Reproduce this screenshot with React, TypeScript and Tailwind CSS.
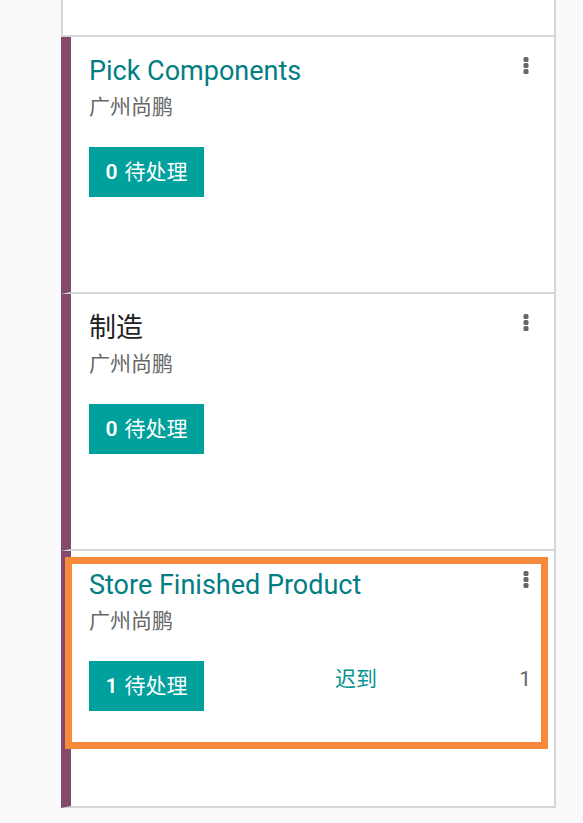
import React from 'react';

interface Picking {
  name: string;
  company: string;
  pending: number;
  late?: number;
  link: boolean;
}

const PICKINGS: Picking[] = [
  { name: 'Pick Components', company: '广州尚鹏', pending: 0, link: true },
  { name: '制造', company: '广州尚鹏', pending: 0, link: false },
  { name: 'Store Finished Product', company: '广州尚鹏', pending: 1, late: 1, link: true },
];

function Kebab() {
  return (
    <svg width="6" height="17" viewBox="0 0 6 17" className="shrink-0">
      <rect x="0.5" y="0" width="5" height="5" rx="1.5" fill="#666" />
      <rect x="0.5" y="6" width="5" height="5" rx="1.5" fill="#666" />
      <rect x="0.5" y="12" width="5" height="5" rx="1.5" fill="#666" />
    </svg>
  );
}

function Card({ p }: { p: Picking }) {
  return (
    <div className="h-[257px] bg-white border-l-[10px] border-l-[#824a6b] border-r-2 border-b-2 border-r-[#d3d7dc] border-b-[#d3d7dc] pl-[18px] pr-[25px] pt-[19px]">
      {/* Header */}
      <div className="flex items-start justify-between">
        <div>
          <div className={`text-[27px] leading-[30px] ${p.link ? 'text-[#017e84]' : 'text-[#222]'}`}>{p.name}</div>
          <div className="text-[21px] leading-[30px] mt-[6px] text-[#666]">{p.company}</div>
        </div>
        <div className="pt-[1px]">
          <Kebab />
        </div>
      </div>

      {/* Actions */}
      <div className="flex items-start mt-[25px]">
        <button className="w-[115px] h-[50px] bg-[#00a09d] text-white text-[21px] font-normal flex items-center justify-center pt-[1px]">
          <span className="font-semibold mr-[7px]">{p.pending}</span>待处理
        </button>
        {p.late !== undefined && (
          <div className="flex-1 flex justify-between ml-[131px] pt-[3px] text-[21px] leading-[30px]">
            <span className="text-[#00938f]">迟到</span>
            <span className="text-[#666] mr-[-2px]">{p.late}</span>
          </div>
        )}
      </div>
    </div>
  );
}

export default function App() {
  return (
    <div
      className="relative w-[583px] h-[823px] bg-[#f9f9f9] overflow-hidden"
      style={{ fontFamily: "Roboto, 'Noto Sans CJK SC', sans-serif" }}
    >
      <div className="ml-[61px] w-[495px]">
        {/* previous card tail */}
        <div className="h-[37px] bg-white border-l-2 border-r-2 border-b-2 border-[#d3d7dc]" />
        {PICKINGS.map((p, i) => (
          <Card key={i} p={p} />
        ))}
      </div>

      {/* highlight annotation */}
      <div className="absolute left-[65px] top-[557px] w-[483px] h-[192px] border-[7px] border-[#f7893b]" />
    </div>
  );
}
